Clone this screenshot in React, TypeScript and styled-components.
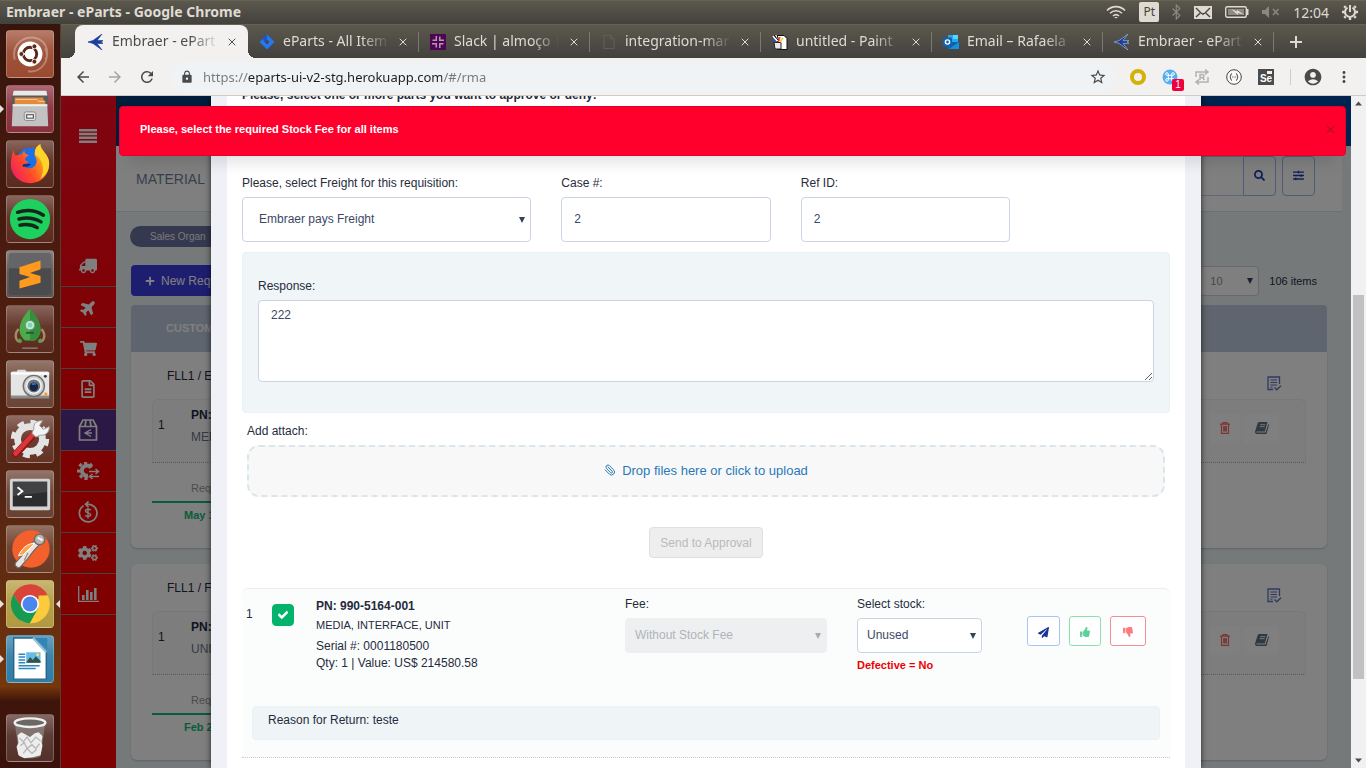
import React, { useState } from 'react';
import styled, { createGlobalStyle, css } from 'styled-components';
import {
  FaTruck, FaPlane, FaShoppingCart, FaRegFileAlt, FaCogs, FaPlus, FaSearch,
  FaPaperPlane, FaThumbsUp, FaThumbsDown, FaCheck, FaSlidersH,
} from 'react-icons/fa';
import { MdArrowBack, MdArrowForward, MdRefresh, MdLock, MdStarBorder, MdAccountCircle, MdMoreVert } from 'react-icons/md';
import { Paperclip } from 'lucide-react';

const GlobalStyle = createGlobalStyle`
  *, *::before, *::after { box-sizing: border-box; }
  body { margin: 0; font-family: "Liberation Sans", Arial, sans-serif; font-size: 12px; color: #262b3c; }
  button, input, select, textarea { font: inherit; color: inherit; margin: 0; }
  button { cursor: pointer; padding: 0; border: 0; background: none; }
  svg { display: block; flex: none; }
`;

/* ---------- desktop shell ---------- */

const Desktop = styled.div`
  display: flex;
  flex-direction: column;
  height: 100vh;
  overflow: hidden;
`;

const TopPanel = styled.header`
  flex: none;
  height: 24px;
  padding: 0 8px 0 6px;
  display: flex;
  align-items: center;
  justify-content: space-between;
  background: linear-gradient(#5b584e, #42413c);
  color: #dfdbd2;
  font-family: "Noto Sans", sans-serif;
  border-top: 1px solid #66634f;
`;

const WindowTitle = styled.h1`
  margin: 0;
  padding-bottom: 2px;
  font-size: 14px;
  line-height: 20px;
  font-weight: 700;
`;

const Indicators = styled.div`
  display: flex;
  align-items: center;
  gap: 13px;
  padding-bottom: 1px;
  font-size: 14px;
`;

const LanguageBadge = styled.span`
  width: 20px;
  height: 20px;
  border-radius: 2px;
  background: #dfdbd2;
  color: #45433d;
  font-size: 12px;
  line-height: 20px;
  text-align: center;
`;

const Workspace = styled.div`
  flex: 1;
  min-height: 0;
  display: flex;
`;

const Launcher = styled.nav`
  flex: none;
  width: 61px;
  padding: 6px 7px 6px 6px;
  display: flex;
  flex-direction: column;
  gap: 7px;
  border-right: 1px solid #5b3a33;
  background: linear-gradient(#36150c 0, #4a1b0e 30%, #552413 62%, #6b320e 84%, #75380b 89%, #3f150b 91%, #3a120b 100%);
`;

const LauncherTile = styled.button<{ $tint: string; $running?: boolean; $focused?: boolean }>`
  position: relative;
  flex: none;
  width: 48px;
  height: 48px;
  border-radius: 4px;
  border: 1px solid rgba(255, 255, 255, 0.22);
  display: grid;
  place-items: center;
  background: linear-gradient(rgba(255, 255, 255, 0.28), rgba(255, 255, 255, 0.06) 45%, rgba(255, 255, 255, 0)), ${(p) => p.$tint};
  &:last-child { margin-top: auto; }
  ${(p) => p.$running && css`
    &::before {
      content: '';
      position: absolute;
      left: -7px;
      top: 19px;
      border: 4px solid transparent;
      border-left-color: #e6dfdc;
      border-right: 0;
    }
  `}
  ${(p) => p.$focused && css`
    &::after {
      content: '';
      position: absolute;
      right: -7px;
      top: 19px;
      border: 4px solid transparent;
      border-right-color: #e6dfdc;
      border-left: 0;
    }
  `}
`;

/* ---------- browser chrome ---------- */

const Browser = styled.div`
  flex: 1;
  min-width: 0;
  display: flex;
  flex-direction: column;
  background: #f2f1f0;
`;

const TabStrip = styled.div`
  flex: none;
  height: 34px;
  padding-left: 16px;
  display: flex;
  background: linear-gradient(#5b584e, #42413c);
  border-top: 1px solid #66634f;
`;

const Tab = styled.div<{ $active?: boolean }>`
  flex: 0 1 171px;
  min-width: 0;
  position: relative;
  padding: 0 8px 0 11px;
  display: flex;
  align-items: center;
  gap: 8px;
  font-family: "Noto Sans", sans-serif;
  font-size: 14px;
  color: ${(p) => (p.$active ? '#4c4c4c' : '#dfdbd2')};
  &::after {
    content: '';
    position: absolute;
    right: 0;
    top: 7px;
    height: 20px;
    width: 1px;
    background: ${(p) => (p.$active ? 'transparent' : '#7b786f')};
  }
  ${(p) => p.$active && css`
    margin-left: -2px;
    padding-left: 13px;
    flex-basis: 173px;
    background: #f2f1f0;
    border-radius: 8px 8px 0 0;
    &::before, &::after {
      content: '';
      position: absolute;
      top: auto;
      bottom: 0;
      width: 8px;
      height: 8px;
    }
    &::before { left: -8px; background: radial-gradient(circle at 0 0, transparent 8px, #f2f1f0 8px); }
    &::after { right: -8px; background: radial-gradient(circle at 100% 0, transparent 8px, #f2f1f0 8px); }
  `}
`;

const TabTitle = styled.span`
  flex: 1;
  min-width: 0;
  overflow: hidden;
  white-space: nowrap;
  line-height: 20px;
  padding-bottom: 1px;
  mask-image: linear-gradient(to right, #000 75%, rgba(0, 0, 0, 0.1));
`;

const TabClose = styled.button`
  width: 16px;
  height: 16px;
  display: grid;
  place-items: center;
`;

const NewTab = styled.button`
  width: 44px;
  display: grid;
  place-items: center;
  color: #dfdbd2;
`;

const Toolbar = styled.div`
  flex: none;
  height: 38px;
  padding: 0 13px;
  display: flex;
  align-items: center;
  gap: 15px;
  border-bottom: 1px solid #cfcdc9;
  color: #4a4a4a;
`;

const NavButtons = styled.div`
  display: flex;
  gap: 14px;
`;

const ToolButton = styled.button<{ $muted?: boolean }>`
  position: relative;
  display: grid;
  place-items: center;
  min-width: 16px;
  color: ${(p) => (p.$muted ? '#a6a5a3' : '#4a4a4a')};
`;

const Omnibox = styled.label`
  flex: 1;
  min-width: 0;
  height: 30px;
  padding: 0 8px 0 9px;
  display: flex;
  align-items: center;
  gap: 9px;
  border-radius: 15px;
  background: #eff3f5;
`;

/* The address shows its scheme and path in grey and its host in black. */
const Address = styled.input`
  flex: 1;
  min-width: 0;
  border: 0;
  padding: 0;
  outline: 0;
  font-family: "Noto Sans", sans-serif;
  font-size: 13px;
  line-height: 20px;
  color: transparent;
  background: linear-gradient(to right, #75787a 45px, #1c1d1e 45px, #1c1d1e 239px, #75787a 239px);
  background-clip: text;
`;

const Extensions = styled.div`
  display: flex;
  align-items: center;
  gap: 16px;
`;

const BrowserMenus = styled.div`
  display: flex;
  align-items: center;
  gap: 12px;
`;

const Count = styled.span`
  position: absolute;
  left: 10px;
  top: 10px;
  width: 12px;
  height: 12px;
  border-radius: 2px;
  background: #f0003c;
  color: #fff;
  font-size: 10px;
  line-height: 12px;
  text-align: center;
`;

const Divider = styled.span`
  width: 1px;
  height: 16px;
  background: #cfcdc9;
`;

const PageArea = styled.div`
  flex: 1;
  min-height: 0;
  display: flex;
`;

const Viewport = styled.div`
  flex: 1;
  min-width: 0;
  position: relative;
  overflow: hidden;
`;

const ScrollTrack = styled.div`
  flex: none;
  width: 15px;
  padding: 5px 0;
  display: flex;
  flex-direction: column;
  align-items: center;
  background: #f1f1f1;
`;

const ScrollThumb = styled.div`
  width: 11px;
  height: 58%;
  margin-top: auto;
  margin-bottom: 79px;
  background: #c1c1c1;
`;

/* ---------- application behind the dialog ---------- */

const AppShell = styled.div`
  display: flex;
  height: 100%;
  background: #ecf3f5;
`;

const Sidebar = styled.nav`
  flex: none;
  width: 55px;
  background: linear-gradient(#ff0a22, #ff0000 50%);
  color: #fff;
`;

const MenuToggle = styled.button`
  width: 54px;
  height: 80px;
  margin-bottom: 70px;
  display: grid;
  place-items: center;
`;

const SideLink = styled.a<{ $active?: boolean }>`
  height: 41px;
  padding-right: 1px;
  display: grid;
  place-items: center;
  color: #fff;
  border-bottom: 1px solid #8f8484;
  background: ${(p) => (p.$active ? '#57318a' : 'transparent')};
`;

const AppMain = styled.div`
  flex: 1;
  min-width: 0;
`;

const NavyBar = styled.div`
  height: 50px;
  background: linear-gradient(to right, #003a75, #00499e);
`;

const PageHeader = styled.div`
  height: 66px;
  margin-right: 9px;
  padding: 10px 27px 16px 20px;
  display: flex;
  align-items: center;
  background: #fff;
  border-bottom: 1px solid #d5e2ec;
`;

const PageTitle = styled.h2`
  margin: 0 auto 0 0;
  font-size: 14px;
  font-weight: 400;
  line-height: 20px;
  color: #6f7f9b;
  padding-top: 6px;
`;

const SearchInput = styled.input`
  width: 200px;
  height: 40px;
  border: 1px solid #c4d0e6;
  border-right: 0;
  background: #fff;
`;

const SquareButton = styled.button<{ $joined?: boolean }>`
  width: 33px;
  height: 40px;
  display: grid;
  place-items: center;
  border: 1px solid #9db9ec;
  border-radius: ${(p) => (p.$joined ? '0 4px 4px 0' : '4px')};
  margin-right: ${(p) => (p.$joined ? '6px' : '0')};
  color: #1f3fb0;
`;

const AppBody = styled.div`
  padding: 14px 24px 0 14px;
`;

const Pill = styled.span`
  display: inline-block;
  width: 150px;
  height: 21px;
  padding-left: 20px;
  border-radius: 11px;
  background: #6a729f;
  color: #f0f0f0;
  font-size: 10px;
  line-height: 21px;
`;

const ActionsRow = styled.div`
  display: flex;
  align-items: center;
  margin: 18px 0 9px 1px;
  padding-right: 10px;
  gap: 10px;
`;

const NewButton = styled.button`
  height: 31px;
  width: 140px;
  padding-left: 14px;
  margin-right: auto;
  display: flex;
  align-items: center;
  gap: 6px;
  border-radius: 4px;
  background: #3c3ce0;
  color: #fff;
`;

const ItemTotal = styled.span`
  font-size: 11px;
`;

const GridHeader = styled.div`
  height: 47px;
  margin-left: 1px;
  padding-left: 35px;
  border-radius: 4px 4px 0 0;
  background: #bccbdd;
  color: #fff;
  font-size: 11px;
  font-weight: 700;
  line-height: 47px;
`;

const RequestCard = styled.article`
  height: 196px;
  margin: 0 0 16px 1px;
  padding: 0 21px;
  border-radius: 0 0 6px 6px;
  background: #fff;
  box-shadow: 0 1px 2px rgba(60, 90, 120, 0.3);
  & + & { border-radius: 6px; }
`;

const CardHead = styled.div`
  height: 47px;
  padding: 0 24px 0 15px;
  display: flex;
  align-items: center;
  justify-content: space-between;
  > svg { margin-top: 16px; }
`;

const CardItem = styled.div`
  height: 64px;
  padding: 0 26px 0 5px;
  display: flex;
  align-items: center;
  gap: 4px;
  border: 1px solid #f0f0f0;
  border-bottom: 1px dotted #b0b0b0;
  border-radius: 6px 6px 0 0;
  background: #fbfbfb;
`;

const CardIndex = styled.span`
  width: 29px;
  padding-bottom: 12px;
`;

const CardPart = styled.div`
  margin-right: auto;
  line-height: 22px;
  padding-bottom: 10px;
  color: #6a7184;
  strong { display: block; color: #262b3c; }
`;

const GhostButton = styled.button<{ $danger?: boolean }>`
  width: ${(p) => (p.$danger ? '30px' : '35px')};
  height: 29px;
  margin-bottom: 6px;
  display: grid;
  place-items: center;
  border-radius: 4px;
  background: #fff;
  color: ${(p) => (p.$danger ? '#f46a6a' : '#5c7284')};
`;

const CardDates = styled.div`
  width: 200px;
  font-size: 11px;
  line-height: 16px;
`;

const CardField = styled.div`
  padding: 17px 0 5px 39px;
  color: #9a9a9a;
  border-bottom: 2px solid #11b878;
`;

const CardDate = styled.div`
  padding: 4px 0 0 32px;
  font-weight: 700;
  color: #11b878;
`;

/* ---------- dialog ---------- */

const Backdrop = styled.div`
  position: absolute;
  inset: 0;
  padding: 0 150px;
  overflow: hidden;
  background: rgba(0, 0, 0, 0.5);
`;

const Dialog = styled.section`
  min-height: 100%;
  padding: 0 16px;
  background: #eff1f7;
  box-shadow: 0 0 6px rgba(0, 0, 0, 0.7);
`;

const DialogBody = styled.div`
  min-height: 672px;
  padding: 0 15px;
  background: #fff;
`;

const Question = styled.p`
  margin: 0;
  height: 79px;
  overflow: hidden;
  font-weight: 700;
  line-height: 16px;
  > span { display: block; margin-top: -9px; }
`;

const FieldLabel = styled.label`
  display: block;
  line-height: 16px;
  margin-bottom: 6px;
`;

const FieldGrid = styled.div`
  display: grid;
  grid-template-columns: repeat(12, 1fr);
  column-gap: 30px;
`;

const Field = styled.div<{ $span: number }>`
  grid-column: span ${(p) => p.$span};
  min-width: 0;
`;

const control = css`
  display: block;
  width: 100%;
  border: 1px solid #ccd3e4;
  border-radius: 4px;
  background: #fff;
  color: #3c4866;
  outline: 0;
`;

const TextInput = styled.input`
  ${control}
  height: 45px;
  padding: 0 12px 2px;
`;

const SelectWrap = styled.div`
  position: relative;
`;

const SelectBox = styled.select<{ $size?: 'small' }>`
  ${control}
  appearance: none;
  opacity: 1;
  height: ${(p) => (p.$size === 'small' ? '35px' : '45px')};
  padding: 0 ${(p) => (p.$size === 'small' ? '9px' : '16px')} 2px;
  &:disabled { background: #eeeff0; border-color: #eeeff0; color: #b0b3b9; }
`;

const PageSize = styled.select`
  ${control}
  appearance: none;
  width: 70px;
  height: 30px;
  padding: 0 20px;
  font-size: 11px;
  color: #8a8f9c;
`;

const CaretBox = styled.svg<{ $muted?: boolean }>`
  position: absolute;
  right: 6px;
  top: 50%;
  margin-top: -3px;
  fill: ${(p) => (p.$muted ? '#a9abb0' : '#33415f')};
  pointer-events: none;
`;

const ResponsePanel = styled.div`
  margin-top: 10px;
  height: 161px;
  padding: 25px 15px 0;
  border: 1px solid #e8f1f4;
  border-radius: 4px;
  background: #f0f5f8;
`;

const ResponseText = styled.textarea`
  ${control}
  height: 82px;
  padding: 6px 12px;
  line-height: 16px;
  resize: vertical;
`;

const Attach = styled.div`
  padding: 10px 5px 0;
`;

const DropZone = styled.button`
  width: 100%;
  height: 52px;
  padding-bottom: 2px;
  display: flex;
  align-items: center;
  justify-content: center;
  gap: 6px;
  border: 2px dashed #dbe5ec;
  border-radius: 12px;
  background: #f8f8f8;
  color: #2a78b8;
  font-size: 13px;
  > svg { transform: scaleX(-1); }
`;

const AttachTitle = styled.div`
  line-height: 16px;
  margin-bottom: 6px;
`;

const SubmitRow = styled.div`
  display: flex;
  justify-content: center;
  padding: 30px 0;
`;

const SubmitButton = styled.button`
  height: 31px;
  padding: 0 10px;
  border: 1px solid #dfdfe0;
  border-radius: 4px;
  background: #eeeeee;
  color: #b9babe;
`;

const PartCard = styled.article`
  padding-bottom: 17px;
  border-top: 1px solid #e8ecf5;
  border-bottom: 1px dotted #c9ccd0;
  border-radius: 6px 6px 0 0;
  background: #fbfdfc;
`;

const PartRow = styled.div`
  display: grid;
  grid-template-columns: 26px 44px minmax(0, 1fr) 232px 170px 143px;
  min-height: 117px;
  padding-left: 4px;
`;

const PartIndex = styled.span`
  padding-top: 17px;
  line-height: 16px;
`;

const TickLabel = styled.label`
  position: relative;
  width: 22px;
  height: 22px;
  margin-top: 15px;
  svg { position: absolute; left: 6px; top: 6px; color: #fff; stroke: #fff; stroke-width: 40px; pointer-events: none; }
`;

const Tick = styled.input`
  appearance: none;
  display: block;
  width: 22px;
  height: 22px;
  border-radius: 4px;
  border: 1px solid #04b36b;
  &:checked { background: #04b36b; }
`;

const PartInfo = styled.div`
  padding-top: 9px;
  line-height: 17px;
`;

const PartDescription = styled.div`
  margin: 2px 0 4px;
  font-size: 11px;
`;

const PartField = styled.div<{ $gap: number }>`
  padding: 7px ${(p) => p.$gap}px 0 0;
`;

const Defective = styled.div`
  margin-top: 4px;
  font-size: 11px;
  line-height: 16px;
  font-weight: 700;
  color: #ee0000;
`;

const RowActions = styled.div`
  display: flex;
  gap: 9px;
  padding-top: 27px;
`;

const tones = {
  send: { edge: '#a9c4f2', ink: '#16349c' },
  approve: { edge: '#8be0b2', ink: '#5fcf9c' },
  deny: { edge: '#f98c90', ink: '#f97c7e' },
};

const IconButton = styled.button<{ $tone: keyof typeof tones }>`
  height: 30px;
  padding: 0 10px;
  display: grid;
  place-items: center;
  border: 1px solid ${(p) => tones[p.$tone].edge};
  border-radius: 3px;
  background: #fff;
  color: ${(p) => tones[p.$tone].ink};
  &:last-child { padding: 0 12px; }
  > svg { margin-top: 2px; }
`;

const Reason = styled.div`
  height: 34px;
  margin: 0 10px;
  padding: 5px 15px;
  border: 1px solid #ebf2f5;
  border-radius: 4px;
  background: #eff4f7;
  line-height: 16px;
`;

const Alert = styled.div`
  position: absolute;
  top: 10px;
  left: 58px;
  right: 5px;
  height: 50px;
  padding: 0 10px 4px 20px;
  display: flex;
  align-items: center;
  justify-content: space-between;
  border: 1px solid #e0022e;
  border-radius: 4px;
  background: #ff002d;
  box-shadow: 0 16px 16px -10px rgba(0, 0, 0, 0.12);
  color: #fff;
  font-size: 11px;
  font-weight: 700;
`;

const AlertClose = styled.button`
  color: #a8122a;
`;

/* ---------- drawings ---------- */

const Caret = ({ muted }: { muted?: boolean }) => (
  <CaretBox width="6" height="6" viewBox="0 0 6 6" $muted={muted} aria-hidden><path d="M0 0h6L3 6z" /></CaretBox>
);

const Cross = ({ size = 8, width = 1 }: { size?: number; width?: number }) => (
  <svg width={size} height={size} viewBox="0 0 8 8" stroke="currentColor" strokeWidth={width} aria-hidden>
    <path d="M.7.7l6.6 6.6M7.300.7L.7 7.300" />
  </svg>
);

const EmbraerMark = ({ light }: { light?: boolean }) => (
  <svg width="16" height="16" viewBox="0 0 16 16" aria-hidden>
    <path d="M14 0L5 6.600 0 8l5 1.400L14 16l-5-6.600H15L13 8l2-1.400H9z" fill="#1d3f9c" stroke={light ? '#9fb2dc' : '#1d3f9c'} strokeWidth=".7" />
  </svg>
);

const JiraMark = () => (
  <svg width="16" height="16" viewBox="0 0 16 16" aria-hidden>
    <path d="M8 .5L15.500 8 8 15.500.5 8z" fill="#2379f5" />
    <path d="M8 5.600L10.400 8 8 10.400 5.600 8z" fill="#4a4842" />
    <path d="M8 .5v5L5.600 8 3.500 5z" fill="#1457d0" />
  </svg>
);

const SlackMark = () => (
  <svg width="16" height="16" viewBox="0 0 16 16" aria-hidden>
    <path fill="#4d0650" d="M0 0h16v16H0z" />
    <path stroke="#b897b8" strokeWidth="1.500" fill="none" d="M6.300 2v5M9.800 2.500v3M2.500 6.300h3M9 6.300h5M2 9.800h5M10.500 9.800h3M6.300 10.500v3M9.800 9v5" />
  </svg>
);

const BlankPage = () => (
  <svg width="16" height="16" viewBox="0 0 16 16" fill="none" stroke="#5f5d56" strokeWidth="1.200" aria-hidden>
    <path d="M3 1.500h6.500L13 5v9.500H3zM9.500 1.500V5H13" />
  </svg>
);

const PaintMark = () => (
  <svg width="16" height="16" viewBox="0 0 16 16" aria-hidden>
    <path fill="#fff" stroke="#111" strokeWidth="1" d="M5.500 1.500H12L15 4.500v11H5.500z" />
    <path fill="#e9e9e9" stroke="#222" d="M2 8.500h7v6.500H3z" />
    <path d="M1 2l4 5M4 1l2 6" stroke="#fff" strokeWidth="1.500" />
    <path d="M2 1l4 5M5 1l2 6" stroke="#111" strokeWidth="1" />
    <path d="M8 3L6 8" stroke="#e33" strokeWidth="1.500" />
    <path d="M11 4L8 8" stroke="#f2d22b" strokeWidth="1.700" />
    <path d="M1 6l3 2" stroke="#224bd6" strokeWidth="1.600" />
  </svg>
);

const OutlookMark = () => (
  <svg width="16" height="16" viewBox="0 0 16 16" aria-hidden>
    <path fill="#28a8ea" d="M5 1h10v8H5z" />
    <path fill="#50d9ff" d="M10 1h5v4h-5z" />
    <path fill="#0a64ad" d="M4 8h12v7H4z" />
    <path fill="#1490df" d="M16 8v7H6z" />
    <rect y="3.500" width="9" height="9" rx="1" fill="#0f62b4" />
    <circle cx="4.500" cy="8" r="2.100" fill="none" stroke="#fff" strokeWidth="1.400" />
  </svg>
);

const Plus = () => (
  <svg width="12" height="12" viewBox="0 0 12 12" stroke="currentColor" strokeWidth="2" aria-hidden>
    <path d="M6 0v12M0 6h12" />
  </svg>
);

const WifiIcon = () => (
  <svg width="20" height="14" viewBox="0 0 20 14" fill="none" stroke="#dfdbd2" strokeWidth="1.600" aria-hidden>
    <path d="M1 5.500C6 .3 14 .3 19 5.500M4 8.300c3.500-3.400 8.500-3.400 12 0M7 11c1.800-1.700 4.200-1.700 6 0" />
    <path d="M10 13.600l-1.800-1.700h3.600z" fill="#dfdbd2" stroke="none" />
  </svg>
);

const BluetoothIcon = () => (
  <svg width="9" height="16" viewBox="0 0 9 16" fill="none" stroke="#8b887f" strokeWidth="1.200" aria-hidden>
    <path d="M.6 4.500l7.300 7L4.300 15V1l3.600 3.500-7.300 7" />
  </svg>
);

const MailIcon = () => (
  <svg width="18" height="13" viewBox="0 0 18 13" aria-hidden>
    <path fill="#dfdbd2" d="M0 0h18v13H0z" />
    <path d="M2 2l5 5 2 1.200L11 7l5-5M2 11l4-3.800M16 11l-4-3.800" stroke="#45433d" strokeWidth="1.400" fill="none" />
  </svg>
);

const BatteryIcon = () => (
  <svg width="24" height="12" viewBox="0 0 24 12" aria-hidden>
    <rect x=".7" y=".7" width="20.600" height="10.600" rx="1.500" fill="none" stroke="#dfdbd2" strokeWidth="1.400" />
    <path fill="#8d8a82" d="M3 3h16v6H3z" />
    <path fill="#dfdbd2" d="M22 3h1.500v6H22zM6 3l6 2.500V4l7 4.500-6-1.500v2z" />
  </svg>
);

const MutedIcon = () => (
  <svg width="18" height="12" viewBox="0 0 18 12" aria-hidden>
    <path fill="#8b887f" d="M0 4h3l4-4v12L3 8H0z" />
    <path d="M11 3l5.500 6M16.500 3L11 9" stroke="#8b887f" strokeWidth="1.600" />
  </svg>
);

const PowerGear = () => (
  <svg width="16" height="16" viewBox="0 0 16 16" fill="none" stroke="#dfdbd2" aria-hidden>
    <path d="M5.500 3.600a5 5 0 1 0 5 0" strokeWidth="2" />
    <path d="M8 1v7" strokeWidth="2" />
    <path d="M3.700 3.700L2.200 2.200M12.300 3.700l1.500-1.500M2.500 8H0M16 8h-2.500M3.700 12.300l-1.500 1.500M12.300 12.300l1.500 1.500M8 13.500V16" strokeWidth="2.400" />
  </svg>
);

const CommandBubble = () => (
  <svg width="16" height="16" viewBox="0 0 16 16" aria-hidden>
    <circle cx="8" cy="8" r="7.500" fill="#55aef0" />
    <path d="M6.300 6.300h3.400v3.400H6.300zM6.300 6.300V5a1.300 1.300 0 1 0-1.300 1.300zM9.700 6.300H11A1.300 1.300 0 1 0 9.700 5zM9.700 9.700V11A1.300 1.300 0 1 0 11 9.700zM6.300 9.700H5A1.300 1.300 0 1 0 6.300 11z" fill="none" stroke="#fff" />
  </svg>
);

const ReplayIcon = () => (
  <svg width="16" height="16" viewBox="0 0 16 16" fill="none" stroke="#b3b2b0" strokeWidth="1.500" aria-hidden>
    <path d="M2 8V3h11M11 .7L14 3l-3 2.300M14 8v5H3M5 10.700L2 13l3 2.300" />
    <path d="M6 11V5.500h2.500a1.500 1.500 0 0 1 0 3H6M8.500 8.500L10.500 11" />
  </svg>
);

const BracesIcon = () => (
  <svg width="16" height="16" viewBox="0 0 16 16" fill="none" stroke="#444" aria-hidden>
    <circle cx="8" cy="8" r="7.300" fill="#fafafa" />
    <path d="M6 4.500c-1.500 0-.8 2.500-2 3.500 1.200 1 .5 3.500 2 3.500M10 4.500c1.500 0 .8 2.500 2 3.500-1.200 1-.5 3.500-2 3.500M6 8h.8M7.700 8h.8M9.300 8h.8" />
  </svg>
);

const SeleniumBox = styled.span`
  width: 16px;
  height: 16px;
  padding-top: 4px;
  background: linear-gradient(#f2f1f0, #f2f1f0) 9px 2px / 5px 3px no-repeat, #4b4b4b;
  color: #fff;
  font-size: 10px;
  font-weight: 700;
  line-height: 12px;
  text-align: center;
`;

const MenuBars = () => (
  <svg width="18" height="14" viewBox="0 0 18 14" fill="currentColor" aria-hidden>
    <path d="M0 0h18v2.500H0zM0 3.800h18v2.500H0zM0 7.600h18v2.500H0zM0 11.400h18V14H0z" />
  </svg>
);

const BoxReturn = () => (
  <svg width="20" height="22" viewBox="0 0 20 22" fill="none" stroke="currentColor" strokeWidth="1.700" aria-hidden>
    <path d="M1.500 7.500h17V21h-17zM1.500 7.500L5 1h10l3.500 6.500M7 7.500L8 1M13 7.500L12 1" />
    <path d="M13 10.500l-6 3.500 6 3.500M8 14h6" strokeWidth="1.400" />
  </svg>
);

const CogExchange = () => (
  <svg width="23" height="20" viewBox="0 0 23 20" fill="none" stroke="currentColor" aria-hidden>
    <path d="M14 6.800A5 5 0 1 0 11 14.500" strokeWidth="4" />
    <path d="M4.500 5L2.500 3M8.500 3.500V1M13 5l2-2M3.500 10H0M5 14.500l-2 2M9 16v3" strokeWidth="3.200" />
    <path d="M12 10.500h9M18.500 8l3 2.500-3 2.500M22 15.500h-9M15.500 13l-3 2.500 3 2.500" strokeWidth="1.500" />
  </svg>
);

const MoneyReturn = () => (
  <svg width="20" height="22" viewBox="0 0 20 22" fill="none" stroke="currentColor" strokeWidth="1.700" aria-hidden>
    <path d="M5.500 4.600A8.800 8.800 0 1 0 11 3.300H7.500M10.500.5L7.500 3.300l3 2.800" />
    <path d="M12.700 9.300c-.5-1.300-5.200-1.600-5.200.8 0 2.300 5.200 1.300 5.200 3.500 0 2.300-4.700 2.200-5.300.6M10 7v10.500" strokeWidth="1.400" />
  </svg>
);

const BarChart = () => (
  <svg width="21" height="16" viewBox="0 0 21 16" aria-hidden>
    <path d="M.7 0v15.300H21" fill="none" stroke="currentColor" strokeWidth="1.300" />
    <path d="M4 9h2.600v5H4zM8 4h2.600v10H8zM12 6h2.600v8H12zM16 2h2.600v12H16z" fill="currentColor" />
  </svg>
);

const TrashCan = () => (
  <svg width="10" height="12" viewBox="0 0 10 12" aria-hidden>
    <path d="M3 1.500V.6h4v.9M0 2.200h10M1.500 2.500v8.800h7V2.500M3.700 4v5.500M5 4v5.500M6.300 4v5.500" fill="none" stroke="currentColor" strokeWidth="1.200" />
  </svg>
);

const SlantedBook = () => (
  <svg width="14" height="12" viewBox="0 0 14 12" aria-hidden>
    <path d="M4 0h8.500l-2.700 9.500H2C1 9.500.8 10.600 2 10.600h8.500L13.400 2c.6.300.6.800.5 1.200L11.500 12H1.800C.4 12-.2 10.700.1 9.500L2.700 1C3 .3 3.400 0 4 0z" fill="currentColor" />
    <path d="M5.300 2.700h5M4.700 4.700h5" stroke="#fff" strokeWidth=".9" />
  </svg>
);

const ListCheck = () => (
  <svg width="15" height="15" viewBox="0 0 15 15" fill="none" stroke="#5d75c4" aria-hidden>
    <path d="M6 13.500H1V1h11.500v7" strokeWidth="1.300" />
    <path d="M3.500 4h6.500M3.500 6.500h6.500M3.500 9h6.500M3.500 11.300h2" strokeWidth="1" />
    <path d="M7.500 11.500l2.300 2.300L14 9.800" strokeWidth="1.400" />
  </svg>
);

const ScrollArrow = ({ up }: { up?: boolean }) => (
  <svg width="7" height="5" viewBox="0 0 7 5" fill="#4b4b4b" aria-hidden>
    <path d={up ? 'M0 4.500L3.500.5 7 4.500z' : 'M0 .5l3.500 4 3.500-4z'} />
  </svg>
);

const Art = ({ children }: { children: React.ReactNode }) => (
  <svg width="46" height="46" viewBox="0 0 48 48" aria-hidden>{children}</svg>
);

const UbuntuArt = () => (
  <Art>
    <path d="M8 30C4 12 20 4 32 8c10 4 12 16 8 22M40 18c6 14-6 26-18 24" fill="none" stroke="#fff" strokeOpacity=".3" strokeWidth="2" />
    <circle cx="24" cy="24" r="13" fill="#fff" />
    <circle cx="24" cy="24" r="7" fill="none" stroke="#5b2716" strokeWidth="3" />
    <path d="M24 24L12 24M24 24l6-10.400M24 24l6 10.400" stroke="#fff" strokeWidth="1.500" />
    <circle cx="24" cy="24" r="5.200" fill="#fff" />
    <g fill="#5b2716" stroke="#fff" strokeWidth=".8"><circle cx="15" cy="24" r="2.500" /><circle cx="28.600" cy="16" r="2.500" /><circle cx="28.600" cy="32" r="2.500" /></g>
  </Art>
);

const FilesArt = () => (
  <Art>
    <path d="M7 5h34l2 9H5z" fill="#e9e9e9" />
    <path d="M5 10h38v10H5z" fill="#5a5a5a" />
    <path d="M8 12h30v3h2v6H8z" fill="#e58a3c" />
    <path d="M9 14h22l2 2h6" stroke="#f7cf9f" fill="none" />
    <path d="M6 19h36l1 23H5z" fill="#c2c2c2" />
    <path d="M6 19h36v2H6z" fill="#f0f0f0" />
    <rect x="18" y="27" width="12" height="9" rx="2" fill="#e2e2e2" stroke="#8b8b8b" />
    <rect x="20.500" y="30" width="7" height="3.500" fill="#fff" stroke="#555" strokeWidth="1.200" />
  </Art>
);

const FirefoxArt = () => (
  <Art>
    <defs>
      <linearGradient id="fox" x1="0" y1=".8" x2="1" y2=".2"><stop offset="0" stopColor="#f01c64" /><stop offset=".4" stopColor="#ff4a2a" /><stop offset=".75" stopColor="#ff9d1a" /><stop offset="1" stopColor="#ffe02e" /></linearGradient>
    </defs>
    <circle cx="24" cy="21" r="14" fill="#1d6fe6" />
    <path d="M7 9c0 3 1 5 2 6l6-1 3-4c0 3 2 4 5 5-3 1-5 3-4 5l3 2c-1 3-4 3-5 3 2 4 8 5 12 1 3-3 2-8 0-10 0-6 0-9 5-12-1 6 10 10 10 20C44 36 35 44 24 44S4 35 4 25c0-6 1-11 3-16z" fill="url(#fox)" />
    <path d="M29 14c0-6 2-9 6-11-1 6 9 10 9 20 0 9-5 14-9 16 5-9 3-19-6-25z" fill="#ffd42a" />
    <path d="M16 25c3-2 5-1 9-1-2 3-5 3-8 3z" fill="#14308a" />
  </Art>
);

const SpotifyArt = () => (
  <Art>
    <circle cx="24" cy="24" r="21" fill="#1ed05e" />
    <path d="M11 17c9-3 19-2 27 3M12.500 24c8-2 16-1 23 3M13.500 30.500c7-1.500 13-.5 18 2.500" fill="none" stroke="#14271a" strokeWidth="3.600" strokeLinecap="round" />
  </Art>
);

const SublimeArt = () => (
  <Art>
    <rect x="2" y="2" width="44" height="44" rx="4" fill="#4b4b4d" />
    <path d="M2 6a4 4 0 0 1 4-4h36a4 4 0 0 1 4 4v12H2z" fill="#77777a" opacity=".6" />
    <path d="M13 17l22-7v9l-11 4 11 3v7l-22 6v-8l11-4-11-3z" fill="#ff9a1f" />
  </Art>
);

const RocketArt = () => (
  <Art>
    <path d="M12 24c-5 6-3 14 3 13M36 24c5 6 3 14-3 13" fill="none" stroke="#a68a62" strokeWidth="2.500" />
    <path d="M15 37l-3-2M33 37l3-2" stroke="#49a84c" strokeWidth="3" />
    <path d="M24 3c8 8 11 16 11 22 0 5-4 10-6 11H19c-2-1-6-6-6-11 0-6 3-14 11-22z" fill="#4cab4b" />
    <path d="M24 3c8 8 11 16 11 22 0 5-4 10-6 11h-5z" fill="#368d3e" />
    <circle cx="24" cy="20" r="5" fill="#bfe9d2" stroke="#6a8a74" />
    <circle cx="24" cy="20" r="2.500" fill="#7fd6b6" />
    <path d="M20 28h8" stroke="#245f2b" strokeWidth="2" />
    <path d="M16 44h16" stroke="#8f7a70" strokeWidth="1.500" />
  </Art>
);

const CameraArt = () => (
  <Art>
    <path d="M11 9h8l2 3H10z" fill="#d9d9d9" />
    <rect x="4" y="11" width="40" height="27" rx="2" fill="#e5e5e5" />
    <path d="M4 36h40v3H4z" fill="#8b8b8b" />
    <path d="M4 13h40" stroke="#fff" strokeWidth="2" />
    <circle cx="28" cy="26" r="11" fill="#cfcfcf" stroke="#707070" strokeWidth="1.500" />
    <circle cx="28" cy="26" r="7.500" fill="#6f7378" stroke="#f2f2f2" strokeWidth="1.500" />
    <circle cx="28" cy="27" r="4.500" fill="#15264b" />
    <path d="M26 24h4" stroke="#4d7fd1" strokeWidth="1.500" />
    <circle cx="40" cy="16" r="1.500" fill="#333" /><path d="M39 33h3v3h-3z" fill="#f59a23" />
  </Art>
);

const ToolsArt = () => (
  <Art>
    <circle cx="24" cy="24" r="13" fill="none" stroke="#e3e3e3" strokeWidth="7" />
    <circle cx="24" cy="24" r="17.500" fill="none" stroke="#e3e3e3" strokeWidth="5" strokeDasharray="7 6.740" />
    <path d="M9 40L31 16" stroke="#8f1517" strokeWidth="7.500" strokeLinecap="round" />
    <path d="M9 39L29 17" stroke="#d8383a" strokeWidth="5" strokeLinecap="round" />
    <path d="M28 13c-1-5 4-9 9-8l-3 5 4 4 6-3c1 5-4 10-9 9l-5 2-4-4z" fill="#f3f3f3" stroke="#9a9a9a" />
  </Art>
);

const TerminalArt = () => (
  <Art>
    <rect x="3" y="8" width="42" height="33" rx="2" fill="#d4d4d4" />
    <rect x="6" y="11" width="36" height="26" fill="#2c2d2f" />
    <path d="M6 11h36v11L6 26z" fill="#fff" opacity=".1" />
    <path d="M11 17l5 4-5 4M18.500 27H26" fill="none" stroke="#fff" strokeWidth="2" />
  </Art>
);

const PostmanArt = () => (
  <Art>
    <circle cx="25" cy="24" r="19.500" fill="#f3602c" />
    <path d="M3 44l11-6 4-3z" fill="#e8552a" />
    <path d="M33 16c-6 5-9 9-14 16l-7 8" fill="none" stroke="#6e6a68" strokeWidth="8" strokeLinecap="round" />
    <path d="M33 16c-6 5-9 9-14 16l-7 8" fill="none" stroke="#e8e4e0" strokeWidth="5.500" strokeLinecap="round" />
    <path d="M29 18c-8 0-14 6-17 13l5-1z" fill="#ffa24d" stroke="#fff" />
    <path d="M22 28l-4 8" stroke="#8a8582" strokeWidth="1.200" />
    <circle cx="34" cy="14" r="5.500" fill="#b9b5b1" stroke="#6e6a68" strokeWidth="1.500" />
    <path d="M32 12l5 3" stroke="#fff" strokeWidth="2" />
  </Art>
);

const ChromeArt = () => (
  <Art>
    <circle cx="24" cy="24" r="20" fill="#fbcb3c" />
    <path d="M24 24L6.700 14A20 20 0 0 1 41.300 14z" fill="#d8433a" />
    <path d="M24 15h18.500A20 20 0 0 0 6.700 14L16 29z" fill="#d8433a" />
    <path d="M6.700 14A20 20 0 0 0 24 44l8.500-15.500H16z" fill="#199a51" />
    <path d="M42.500 15A20 20 0 0 1 24 44l8.500-15L33 15z" fill="#fbcb3c" />
    <circle cx="24" cy="24" r="9.500" fill="#fff" />
    <circle cx="24" cy="24" r="7.800" fill="#4a86ee" />
  </Art>
);

const WriterArt = () => (
  <Art>
    <path d="M29 2h13v12z" fill="#2f86b8" />
    <path d="M7 2h20l14 15v28H7z" fill="#fff" stroke="#27668b" strokeWidth="1.500" />
    <path d="M27 2l14 15" stroke="#9cc7df" strokeWidth="2" />
    <path d="M12 19h7M12 22h7M12 25h7M12 28h7M12 31h22M12 34h18" stroke="#2a88c0" strokeWidth="1.500" />
    <rect x="20" y="17" width="15" height="11" fill="#66bdea" />
    <path d="M20 28l4-6 3 3 3-4 5 5v2z" fill="#355247" />
    <circle cx="32" cy="19.500" r="1.500" fill="#ffe15a" />
  </Art>
);

const TrashArt = () => (
  <Art>
    <path d="M8 8l5 35c3 3 19 3 22 0L40 8z" fill="#8d8784" opacity=".7" />
    <ellipse cx="24" cy="8" rx="16" ry="4.500" fill="#6b6765" stroke="#f0f0f0" strokeWidth="2.500" />
    <path d="M11 21l4-3 4 2 5 3 5-4 4-1 4 4-1 6 1 4-2 10-8 2-9 1-6-3-2-9 2-4z" fill="#ededed" />
    <path d="M13 24l4 4 4-5 4 6 5-6 5 4M14 32l4-3 3 6 5-4 4 4 4-5M17 40l4-5 5 5 5-4" fill="none" stroke="#b5b5b5" strokeWidth="1.300" />
  </Art>
);

/* ---------- data ---------- */

const launcherItems = [
  { name: 'Search', tint: '#9a4a30', art: <UbuntuArt /> },
  { name: 'Files', tint: '#8a2f3c', art: <FilesArt />, running: true },
  { name: 'Firefox', tint: '#5b2a1e', art: <FirefoxArt /> },
  { name: 'Spotify', tint: '#5b2a1e', art: <SpotifyArt /> },
  { name: 'Sublime Text', tint: '#5a5350', art: <SublimeArt /> },
  { name: 'Robo 3T', tint: '#5b2a1e', art: <RocketArt /> },
  { name: 'Screenshot', tint: '#6a4434', art: <CameraArt /> },
  { name: 'System Settings', tint: '#643326', art: <ToolsArt /> },
  { name: 'Terminal', tint: '#6a4032', art: <TerminalArt /> },
  { name: 'Postman', tint: '#6a3a26', art: <PostmanArt /> },
  { name: 'Google Chrome', tint: '#b39a40', art: <ChromeArt />, running: true, focused: true },
  { name: 'LibreOffice Writer', tint: '#2f7ca6', art: <WriterArt />, running: true },
  { name: 'Trash', tint: '#54302a', art: <TrashArt /> },
];

const tabs = [
  { title: 'Embraer - ePart', icon: <EmbraerMark />, active: true },
  { title: 'eParts - All Item', icon: <JiraMark /> },
  { title: 'Slack | almoço |', icon: <SlackMark /> },
  { title: 'integration-mar', icon: <BlankPage /> },
  { title: 'untitled - Paint', icon: <PaintMark /> },
  { title: 'Email – Rafaela', icon: <OutlookMark /> },
  { title: 'Embraer - ePart', icon: <EmbraerMark light /> },
];

const sideLinks = [
  { name: 'Shipping', icon: <FaTruck size={18} transform="scale(-1 1)" /> },
  { name: 'Flights', icon: <FaPlane size={17} transform="rotate(-45)" /> },
  { name: 'Cart', icon: <FaShoppingCart size={17} /> },
  { name: 'Documents', icon: <FaRegFileAlt size={18} /> },
  { name: 'Returns', icon: <BoxReturn />, active: true },
  { name: 'Exchange', icon: <CogExchange /> },
  { name: 'Refunds', icon: <MoneyReturn /> },
  { name: 'Settings', icon: <FaCogs size={20} /> },
  { name: 'Reports', icon: <BarChart /> },
];

const requests = [
  { customer: 'FLL1 / E', part: 'MED', date: 'May 1' },
  { customer: 'FLL1 / F', part: 'UNI', date: 'Feb 2' },
];

/* ---------- views ---------- */

function BackgroundApp() {
  return (
    <AppShell>
      <Sidebar>
        <MenuToggle aria-label="Menu"><MenuBars /></MenuToggle>
        {sideLinks.map((link) => (
          <SideLink key={link.name} href="#/rma" aria-label={link.name} $active={link.active}>{link.icon}</SideLink>
        ))}
      </Sidebar>
      <AppMain>
        <NavyBar />
        <PageHeader>
          <PageTitle>MATERIAL</PageTitle>
          <SearchInput aria-label="Search" />
          <SquareButton $joined aria-label="Search"><FaSearch size={11} /></SquareButton>
          <SquareButton aria-label="Filters"><FaSlidersH size={11} /></SquareButton>
        </PageHeader>
        <AppBody>
          <Pill>Sales Organ</Pill>
          <ActionsRow>
            <NewButton><FaPlus size={10} />New Requ</NewButton>
            <SelectWrap>
              <PageSize aria-label="Items per page" defaultValue="10"><option>10</option></PageSize>
              <Caret />
            </SelectWrap>
            <ItemTotal>106 items</ItemTotal>
          </ActionsRow>
          <GridHeader>CUSTOM</GridHeader>
          {requests.map((request) => (
            <RequestCard key={request.customer}>
              <CardHead><span>{request.customer}</span><ListCheck /></CardHead>
              <CardItem>
                <CardIndex>1</CardIndex>
                <CardPart><strong>PN:</strong>{request.part}</CardPart>
                <GhostButton $danger aria-label="Delete"><TrashCan /></GhostButton>
                <GhostButton aria-label="Details"><SlantedBook /></GhostButton>
              </CardItem>
              <CardDates>
                <CardField>Req</CardField>
                <CardDate>{request.date}</CardDate>
              </CardDates>
            </RequestCard>
          ))}
        </AppBody>
      </AppMain>
    </AppShell>
  );
}

function ApprovalDialog() {
  const [selected, setSelected] = useState(true);
  return (
    <Dialog role="dialog" aria-label="Approve or deny parts">
      <DialogBody>
        <Question><span>Please, select one or more parts you want to approve or deny:</span></Question>
        <FieldGrid>
          <Field $span={4}>
            <FieldLabel htmlFor="freight">Please, select Freight for this requisition:</FieldLabel>
            <SelectWrap>
              <SelectBox id="freight"><option>Embraer pays Freight</option></SelectBox>
              <Caret />
            </SelectWrap>
          </Field>
          <Field $span={3}>
            <FieldLabel htmlFor="case">Case #:</FieldLabel>
            <TextInput id="case" defaultValue="2" />
          </Field>
          <Field $span={3}>
            <FieldLabel htmlFor="ref">Ref ID:</FieldLabel>
            <TextInput id="ref" defaultValue="2" />
          </Field>
        </FieldGrid>
        <ResponsePanel>
          <FieldLabel htmlFor="response">Response:</FieldLabel>
          <ResponseText id="response" defaultValue="222" />
        </ResponsePanel>
        <Attach>
          <AttachTitle>Add attach:</AttachTitle>
          <DropZone><Paperclip size={12} />Drop files here or click to upload</DropZone>
        </Attach>
        <SubmitRow><SubmitButton disabled>Send to Approval</SubmitButton></SubmitRow>
        <PartCard>
          <PartRow>
            <PartIndex>1</PartIndex>
            <TickLabel>
              <Tick type="checkbox" aria-label="Select part" checked={selected} onChange={(e) => setSelected(e.target.checked)} />
              <FaCheck size={10} />
            </TickLabel>
            <PartInfo>
              <strong>PN: 990-5164-001</strong>
              <PartDescription>MEDIA, INTERFACE, UNIT</PartDescription>
              <div>Serial #: 0001180500</div>
              <div>Qty: 1 | Value: US$ 214580.58</div>
            </PartInfo>
            <PartField $gap={30}>
              <FieldLabel htmlFor="fee">Fee:</FieldLabel>
              <SelectWrap>
                <SelectBox id="fee" $size="small" disabled><option>Without Stock Fee</option></SelectBox>
                <Caret muted />
              </SelectWrap>
            </PartField>
            <PartField $gap={45}>
              <FieldLabel htmlFor="stock">Select stock:</FieldLabel>
              <SelectWrap>
                <SelectBox id="stock" $size="small"><option>Unused</option></SelectBox>
                <Caret />
              </SelectWrap>
              <Defective>Defective = No</Defective>
            </PartField>
            <RowActions>
              <IconButton $tone="send" aria-label="Send"><FaPaperPlane size={11} /></IconButton>
              <IconButton $tone="approve" aria-label="Approve"><FaThumbsUp size={10} /></IconButton>
              <IconButton $tone="deny" aria-label="Deny"><FaThumbsDown size={10} /></IconButton>
            </RowActions>
          </PartRow>
          <Reason>Reason for Return: teste</Reason>
        </PartCard>
      </DialogBody>
    </Dialog>
  );
}

export default function App() {
  return (
    <Desktop>
      <GlobalStyle />
      <TopPanel>
        <WindowTitle>Embraer - eParts - Google Chrome</WindowTitle>
        <Indicators>
          <WifiIcon />
          <LanguageBadge>Pt</LanguageBadge>
          <BluetoothIcon />
          <MailIcon />
          <BatteryIcon />
          <MutedIcon />
          <time>12:04</time>
          <PowerGear />
        </Indicators>
      </TopPanel>
      <Workspace>
        <Launcher aria-label="Launcher">
          {launcherItems.map((item) => (
            <LauncherTile key={item.name} aria-label={item.name} $tint={item.tint} $running={item.running} $focused={item.focused}>
              {item.art}
            </LauncherTile>
          ))}
        </Launcher>
        <Browser>
          <TabStrip>
            {tabs.map((tab, i) => (
              <Tab key={i} $active={tab.active}>
                {tab.icon}
                <TabTitle>{tab.title}</TabTitle>
                <TabClose aria-label="Close tab"><Cross width={1} /></TabClose>
              </Tab>
            ))}
            <NewTab aria-label="New tab"><Plus /></NewTab>
          </TabStrip>
          <Toolbar>
            <NavButtons>
              <ToolButton aria-label="Back"><MdArrowBack size={18} /></ToolButton>
              <ToolButton aria-label="Forward" $muted><MdArrowForward size={18} /></ToolButton>
              <ToolButton aria-label="Reload"><MdRefresh size={18} /></ToolButton>
            </NavButtons>
            <Omnibox>
              <MdLock size={14} />
              <Address aria-label="Address" defaultValue="https://eparts-ui-v2-stg.herokuapp.com/#/rma" />
              <MdStarBorder size={18} />
            </Omnibox>
            <Extensions>
              <ToolButton aria-label="Recorder">
                <svg width="16" height="16" viewBox="0 0 16 16"><circle cx="8" cy="8" r="6" fill="none" stroke="#d4b106" strokeWidth="4" /></svg>
              </ToolButton>
              <ToolButton aria-label="Shortcuts"><CommandBubble /><Count>1</Count></ToolButton>
              <ToolButton aria-label="Replay"><ReplayIcon /></ToolButton>
              <ToolButton aria-label="JSON viewer"><BracesIcon /></ToolButton>
              <ToolButton aria-label="Selenium"><SeleniumBox>Se</SeleniumBox></ToolButton>
              <BrowserMenus>
                <Divider />
                <ToolButton aria-label="Profile"><MdAccountCircle size={20} /></ToolButton>
                <ToolButton aria-label="Browser menu"><MdMoreVert size={18} /></ToolButton>
              </BrowserMenus>
            </Extensions>
          </Toolbar>
          <PageArea>
            <Viewport>
              <BackgroundApp />
              <Backdrop><ApprovalDialog /></Backdrop>
              <Alert role="alert">
                Please, select the required Stock Fee for all items
                <AlertClose aria-label="Dismiss"><Cross size={9} /></AlertClose>
              </Alert>
            </Viewport>
            <ScrollTrack><ScrollArrow up /><ScrollThumb /><ScrollArrow /></ScrollTrack>
          </PageArea>
        </Browser>
      </Workspace>
    </Desktop>
  );
}
